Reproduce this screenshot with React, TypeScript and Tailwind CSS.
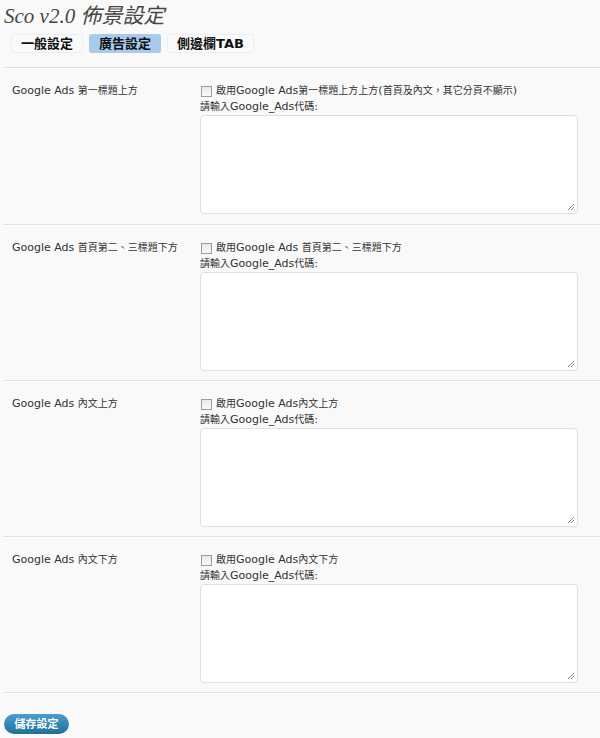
import React from "react";

const sections = [
  {
    label: "Google Ads 第一標題上方",
    check: "啟用Google Ads第一標題上方上方(首頁及內文，其它分頁不顯示)",
  },
  {
    label: "Google Ads 首頁第二、三標題下方",
    check: "啟用Google Ads 首頁第二、三標題下方",
  },
  { label: "Google Ads 內文上方", check: "啟用Google Ads內文上方" },
  { label: "Google Ads 內文下方", check: "啟用Google Ads內文下方" },
];

const sans = "font-['DejaVu_Sans','Noto_Sans_CJK_TC',sans-serif]";

// CJK glyphs in the original are a touch smaller than the latin text
function Mixed({ text }: { text: string }) {
  const parts = text.split(/([\u3000-\u9fff\uff00-\uffef]+)/);
  return (
    <>
      {parts.map((p, i) =>
        i % 2 === 1 ? (
          <span key={i} className="text-[10px]">
            {p}
          </span>
        ) : (
          <span key={i}>{p}</span>
        ),
      )}
    </>
  );
}

function ResizeGrip() {
  return (
    <svg className="absolute right-[2px] bottom-[2px]" width="8" height="8" viewBox="0 0 8 8">
      <path d="M7 1 L1 7 M7 4 L4 7" stroke="#8a8a8a" strokeWidth="1" />
    </svg>
  );
}

function Section({ label, check }: { label: string; check: string }) {
  return (
    <div className="flex border-b border-[#dfdfdf] shadow-[0_1px_0_#fff] h-[156px] first:h-[157px] pt-[15px]">
      <div className={`w-[197px] pl-[9px] text-[11px] leading-[14px] text-[#333] pt-[1px] ${sans}`}>
        <Mixed text={label} />
      </div>
      <div className="flex flex-col">
        <label className={`flex items-center h-[16px] text-[11px] text-[#333] ${sans}`}>
          <span className="w-[11px] h-[11px] ml-[1px] mr-[4px] border border-[#9c9c9c] bg-gradient-to-b from-[#e8e8e8] to-[#fafafa]" />
          <span>
            <Mixed text={check} />
          </span>
        </label>
        <div className={`h-[16px] text-[11px] leading-[16px] text-[#333] ${sans}`}>
          <Mixed text="請輸入Google_Ads代碼:" />
        </div>
        <div className="relative w-[378px] h-[99px] bg-white border border-[#dfdfdf] rounded-[4px]">
          <ResizeGrip />
        </div>
      </div>
    </div>
  );
}

export default function App() {
  return (
    <div className="w-[600px] h-[738px] bg-[#f9f9f9] overflow-hidden">
      <div className="pl-[4px] pt-[4px] h-[34px] text-[21px] leading-[24px] italic text-[#464646] font-['Liberation_Serif','Noto_Sans_CJK_TC',serif]">
        Sco v2.0 佈景設定
      </div>
      <div className={`flex items-center gap-[6px] pl-[11px] h-[19px] mb-[14px] text-[13px] font-bold text-[#111] ${sans}`}>
        <div className="h-[19px] w-[72px] flex items-center justify-center rounded-[3px] border border-[#eeeeee] bg-[#fafafa]">一般設定</div>
        <div className="h-[19px] w-[72px] flex items-center justify-center rounded-[3px] bg-[#a7caed]">廣告設定</div>
        <div className="h-[19px] w-[87px] flex items-center justify-center rounded-[3px] border border-[#eeeeee] bg-[#fafafa]">側邊欄TAB</div>
      </div>
      <div className="ml-[3px] border-t border-[#dfdfdf] shadow-[inset_0_1px_0_#fff]">
        {sections.map((s) => (
          <Section key={s.label} label={s.label} check={s.check} />
        ))}
      </div>
      <div className="pt-[21px] pl-[4px]">
        <button className="h-[20px] w-[65px] rounded-full bg-gradient-to-b from-[#4a9fd0] to-[#1f6f99] text-white text-[11px] font-bold font-['Liberation_Serif','Noto_Sans_CJK_TC',serif] flex items-center justify-center">
          儲存設定
        </button>
      </div>
    </div>
  );
}
